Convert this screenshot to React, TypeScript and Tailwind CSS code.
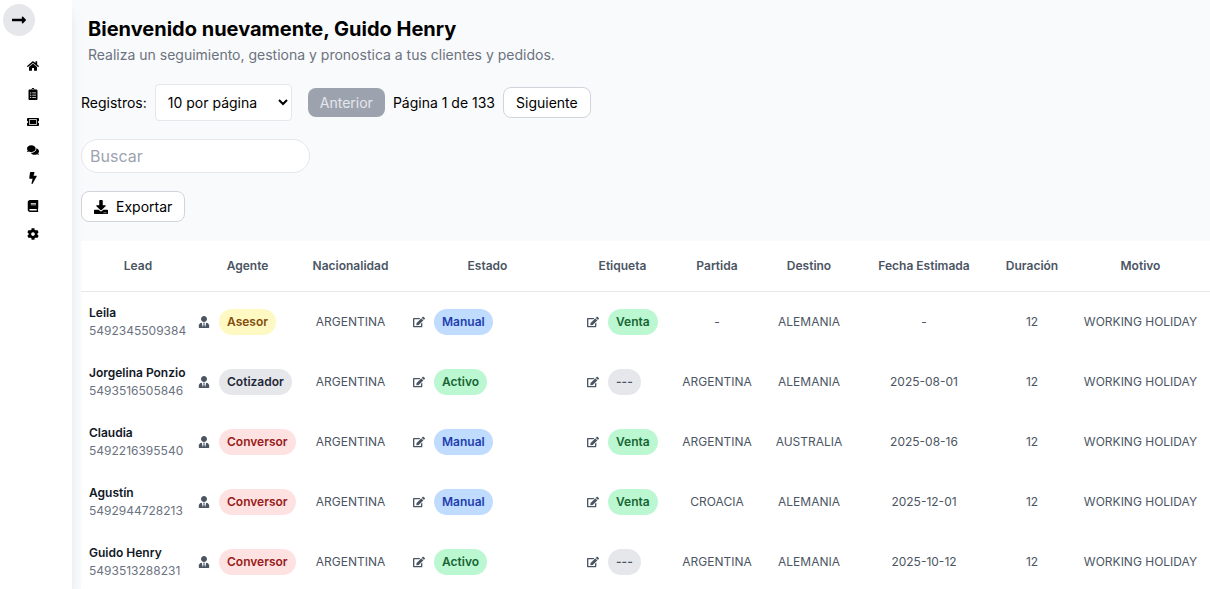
import type { ReactNode } from "react";
import {
  FaBolt,
  FaBook,
  FaClipboardList,
  FaCog,
  FaComments,
  FaDownload,
  FaEdit,
  FaHome,
  FaLongArrowAltRight,
  FaTicketAlt,
  FaUserTie,
} from "react-icons/fa";

const navItems = [
  { label: "Inicio", Icon: FaHome },
  { label: "Registros", Icon: FaClipboardList },
  { label: "Tickets", Icon: FaTicketAlt },
  { label: "Chats", Icon: FaComments },
  { label: "Acciones", Icon: FaBolt },
  { label: "Catálogo", Icon: FaBook },
  { label: "Configuración", Icon: FaCog },
];

const columns = [
  { title: "Lead", width: "w-[114px]" },
  { title: "Agente", width: "w-[105px]" },
  { title: "Nacionalidad", width: "w-[101px]" },
  { title: "Estado", width: "w-[173px]" },
  { title: "Etiqueta", width: "w-[97px]" },
  { title: "Partida", width: "w-[92px]" },
  { title: "Destino", width: "w-[92px]" },
  { title: "Fecha Estimada", width: "w-[138px]" },
  { title: "Duración", width: "w-[78px]" },
  { title: "Motivo", width: "w-[139px]" },
];

const tones: Record<string, string> = {
  Asesor: "bg-[#fef9c3] text-[#854d0e]",
  Cotizador: "bg-[#e5e7eb] text-[#1f2937]",
  Conversor: "bg-[#fee2e2] text-[#991b1b]",
  Manual: "bg-[#bfdbfe] text-[#1e40af]",
  Activo: "bg-[#bbf7d0] text-[#166534]",
  Venta: "bg-[#bbf7d0] text-[#166534]",
  "---": "bg-[#e5e7eb] text-[#4b5563]",
};

const leads = [
  { name: "Leila", phone: "5492345509384", agent: "Asesor", status: "Manual", tag: "Venta", from: "-", to: "ALEMANIA", date: "-" },
  { name: "Jorgelina Ponzio", phone: "5493516505846", agent: "Cotizador", status: "Activo", tag: "---", from: "ARGENTINA", to: "ALEMANIA", date: "2025-08-01" },
  { name: "Claudia", phone: "5492216395540", agent: "Conversor", status: "Manual", tag: "Venta", from: "ARGENTINA", to: "AUSTRALIA", date: "2025-08-16" },
  { name: "Agustín", phone: "5492944728213", agent: "Conversor", status: "Manual", tag: "Venta", from: "CROACIA", to: "ALEMANIA", date: "2025-12-01" },
  { name: "Guido Henry", phone: "5493513288231", agent: "Conversor", status: "Activo", tag: "---", from: "ARGENTINA", to: "ALEMANIA", date: "2025-10-12" },
];

function Pill({ text }: { text: string }) {
  return (
    <span className={`rounded-full px-2 py-1 text-[12px] leading-[18px] font-semibold ${tones[text]}`}>
      {text}
    </span>
  );
}

function IconButton({ label, children }: { label: string; children: ReactNode }) {
  return (
    <button type="button" aria-label={label} className="shrink-0 cursor-pointer text-[12px] text-[#4b5563]">
      {children}
    </button>
  );
}

export default function App() {
  return (
    <div className="flex h-screen overflow-hidden bg-[#f9fafb] font-[Inter,sans-serif] text-[14px] leading-5 text-black">
      <aside className="z-10 flex w-[72px] shrink-0 flex-col bg-white shadow-lg">
        <button
          type="button"
          aria-label="Abrir menú"
          className="mt-1 ml-[3px] flex size-8 items-center justify-center rounded-full bg-[#e5e7eb]"
        >
          <FaLongArrowAltRight className="size-4" />
        </button>
        <nav className="mt-4 flex flex-col items-start pl-[27px]">
          {navItems.map(({ label, Icon }) => (
            <a key={label} href="#" aria-label={label} className="flex h-7 items-center">
              <Icon className="size-3" />
            </a>
          ))}
        </nav>
      </aside>

      <main className="min-w-0 flex-1 overflow-hidden pl-[9px]">
        <header className="px-[7px] pt-[15px]">
          <h1 className="text-[20px] leading-7 font-bold">Bienvenido nuevamente, Guido Henry</h1>
          <p className="mt-0.5 text-[14px] leading-5 text-[#6b7280]">
            Realiza un seguimiento, gestiona y pronostica a tus clientes y pedidos.
          </p>
        </header>

        <div className="mt-[19px] flex items-center">
          <label htmlFor="page-size" className="mr-2">
            Registros:
          </label>
          <select
            id="page-size"
            defaultValue="10"
            className="mr-4 h-[37px] w-[137px] rounded border border-[#e5e7eb] bg-white px-2"
          >
            <option value="10">10 por página</option>
            <option value="20">20 por página</option>
            <option value="50">50 por página</option>
          </select>
          <button type="button" disabled className="rounded-lg bg-[#9ca3af] px-3 py-1 leading-[21px] text-[#e5e7eb]">
            Anterior
          </button>
          <span className="mx-2">Página 1 de 133</span>
          <button type="button" className="rounded-lg border border-[#d1d5db] bg-white px-3 py-1 leading-[21px]">
            Siguiente
          </button>
        </div>

        <div className="mt-[18px]">
          <input
            type="search"
            aria-label="Buscar"
            placeholder="Buscar"
            className="block h-[34px] w-[229px] rounded-full border border-[#e5e7eb] bg-white px-2 text-[16px] placeholder:text-[#9ca3af]"
          />
        </div>

        <button
          type="button"
          className="mt-[18px] flex items-center gap-2 rounded-lg border border-[#d1d5db] bg-white px-3 py-1 leading-[21px]"
        >
          <FaDownload className="size-[14px]" />
          Exportar
        </button>

        <table className="mt-[19px] w-full table-fixed border-separate border-spacing-0 bg-white text-center text-[12px] leading-[18px] text-[#4b5563]">
          <thead>
            <tr className="h-[51px]">
              {columns.map(({ title, width }) => (
                <th key={title} scope="col" className={`${width} border-b border-[#e5e7eb] font-semibold whitespace-nowrap`}>
                  {title}
                </th>
              ))}
            </tr>
          </thead>
          <tbody>
            {leads.map((lead) => (
              <tr key={lead.phone} className="h-[60px] whitespace-nowrap">
                <td className="px-2 text-left">
                  <div className="font-semibold text-[#111827]">{lead.name}</div>
                  <div className="text-[#6b7280]">{lead.phone}</div>
                </td>
                <td>
                  <div className="flex items-center gap-[9px] pl-[3px]">
                    <IconButton label="Cambiar agente">
                      <FaUserTie />
                    </IconButton>
                    <Pill text={lead.agent} />
                  </div>
                </td>
                <td>ARGENTINA</td>
                <td>
                  <div className="flex items-center gap-[9px] pl-3">
                    <IconButton label="Editar estado">
                      <FaEdit />
                    </IconButton>
                    <Pill text={lead.status} />
                  </div>
                </td>
                <td>
                  <div className="flex items-center gap-[9px] pl-[13px]">
                    <IconButton label="Editar etiqueta">
                      <FaEdit />
                    </IconButton>
                    <Pill text={lead.tag} />
                  </div>
                </td>
                <td>{lead.from}</td>
                <td>{lead.to}</td>
                <td>{lead.date}</td>
                <td>12</td>
                <td>WORKING HOLIDAY</td>
              </tr>
            ))}
          </tbody>
        </table>
      </main>
    </div>
  );
}
